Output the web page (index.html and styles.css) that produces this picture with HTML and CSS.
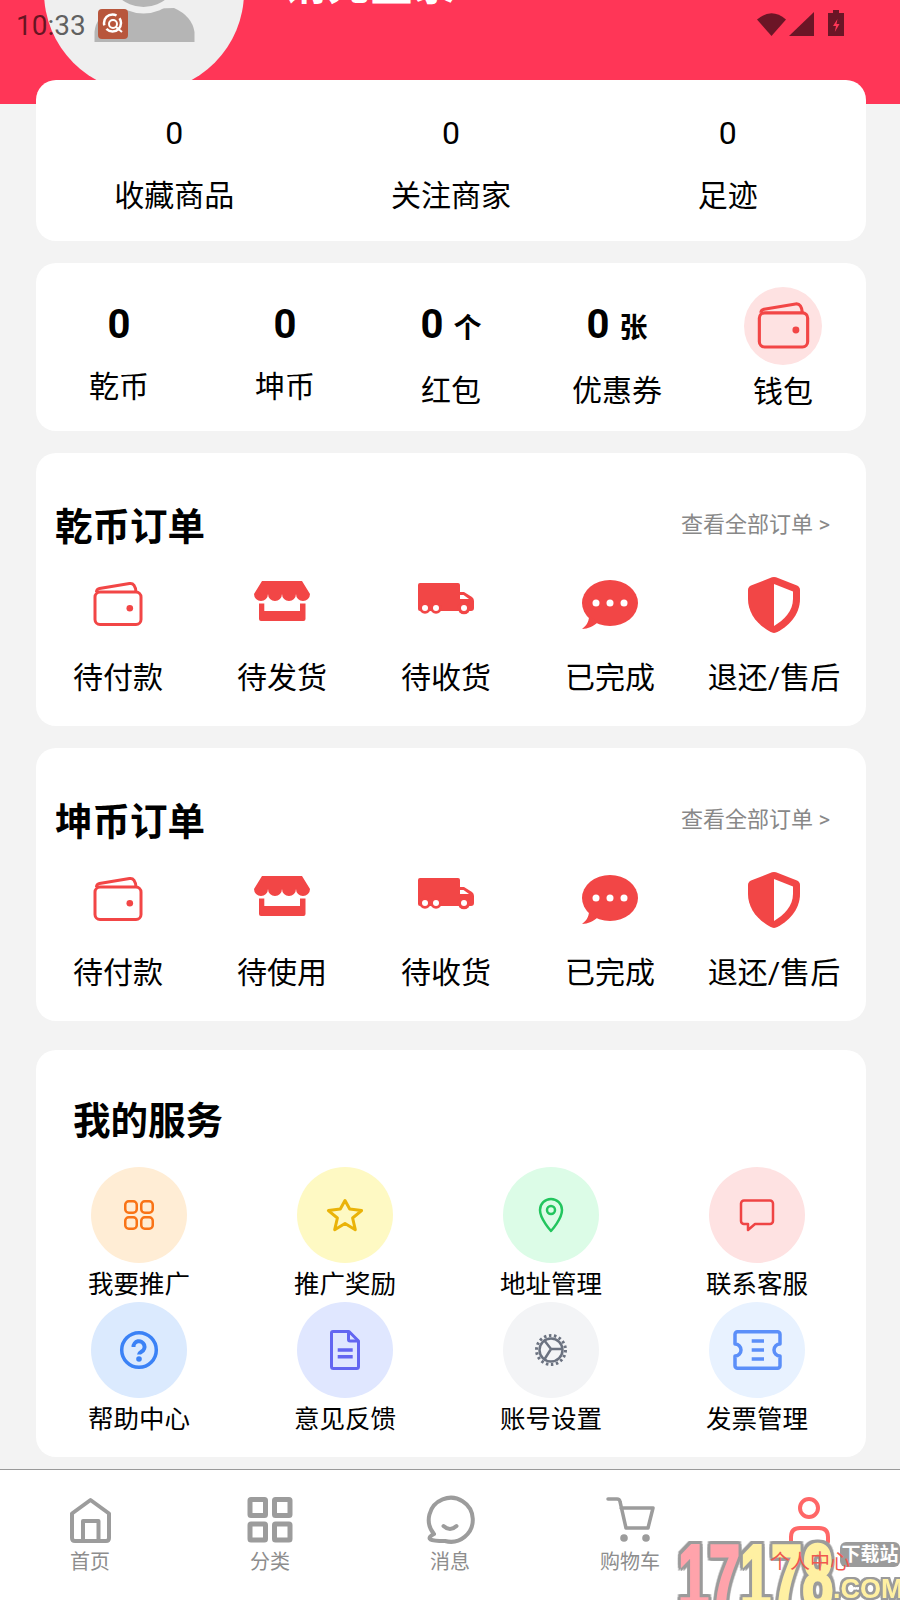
FILE: index.html
```html
<!DOCTYPE html>
<html lang="zh-CN">
<head>
<meta charset="utf-8">
<title>个人中心</title>
<link rel="stylesheet" href="styles.css">
</head>
<body>
<svg class="sprite" xmlns="http://www.w3.org/2000/svg">
  <symbol id="i-wallet" viewBox="0 0 60 60">
    <g transform="translate(5.5 7)" fill="none" stroke="currentColor" stroke-width="3">
      <rect x="1.5" y="10" width="46" height="32.5" rx="5"/>
      <path d="M3 10C3 8 4 7 6 6.500L36 1.600C40 1 42 4 42.500 10"/>
      <circle cx="36.300" cy="26.300" r="3.300" fill="currentColor" stroke="none"/>
    </g>
  </symbol>
  <symbol id="i-store" viewBox="0 0 60 60">
    <g transform="translate(2 6)" fill="currentColor">
      <path d="M8 0H48L56 13A7 7 0 0 1 42 13A7 7 0 0 1 28 13A7 7 0 0 1 14 13A7 7 0 0 1 0 13Z"/>
      <path d="M5 22.500H10.300V30H46V22.500H51.500V38Q51.500 40 49.500 40H7Q5 40 5 38Z"/>
    </g>
  </symbol>
  <symbol id="i-truck" viewBox="0 0 60 60">
    <g transform="translate(2 8)">
      <path fill="currentColor" d="M2 0H40Q42 0 42 2V9H46L54 14Q56 15.500 56 18V25Q56 28 53 28H2Q0 28 0 26V2Q0 0 2 0Z"/>
      <circle cx="7" cy="25" r="5.800" fill="currentColor"/>
      <circle cx="18" cy="25" r="5.800" fill="currentColor"/>
      <circle cx="46" cy="25" r="6.300" fill="currentColor"/>
      <circle cx="7" cy="25" r="3" fill="#fff"/>
      <circle cx="18" cy="25" r="3" fill="#fff"/>
      <circle cx="46" cy="25" r="3" fill="#fff"/>
      <path fill="#fff" d="M42 12H45.500L51 16H42Z"/>
    </g>
  </symbol>
  <symbol id="i-bubble" viewBox="0 0 60 60">
    <g transform="translate(2 5)">
      <ellipse cx="28" cy="23" rx="28" ry="23" fill="currentColor"/>
      <path fill="currentColor" d="M7 36C7 42 4 46 0 49C6 49 12 46 16 42Z"/>
      <circle cx="14" cy="23" r="3.500" fill="#fff"/>
      <circle cx="28" cy="23" r="3.500" fill="#fff"/>
      <circle cx="42" cy="23" r="3.500" fill="#fff"/>
    </g>
  </symbol>
  <symbol id="i-shield" viewBox="0 0 60 60">
    <g transform="translate(4 2)">
      <path fill="currentColor" d="M24 0.300Q26 -0.300 28 0.300L49 8.500Q52 10 52 13V22C52 38 40 50 28 55.500Q26 56.300 24 55.500C12 50 0 38 0 22V13Q0 10 3 8.500Z"/>
      <path fill="#fff" d="M26 7L45 14.500V22C45 34 36 43 26 49Z"/>
    </g>
  </symbol>
</svg>

<div class="status">
  <span class="clock">10:33</span>
  <svg class="app-badge" viewBox="0 0 30 30" aria-hidden="true">
    <rect width="30" height="30" rx="4" fill="#b8563c"/>
    <g fill="none" stroke="#fff">
      <circle cx="14.500" cy="14" r="8.500" stroke-width="2.500" stroke-dasharray="20 4"/>
      <circle cx="15" cy="15" r="4" stroke-width="2"/>
      <path d="M18 18L24 23" stroke-width="2"/>
    </g>
  </svg>
  <span class="status-fill"></span>
  <svg class="status-wifi" viewBox="0 0 29 24" aria-hidden="true"><path d="M0 7.500Q14.500 -5 29 7.500L14.500 24Z"/></svg>
  <svg class="status-signal" viewBox="0 0 25 24" aria-hidden="true"><path d="M25 0V24H0Z"/></svg>
  <svg class="status-battery" viewBox="0 0 16 26" aria-hidden="true">
    <path d="M5 0H11V3H16V26H0V3H5Z"/>
    <path d="M9.500 9L5 16H8L6.800 22L11.500 14H8.500Z" fill="#ff3657"/>
  </svg>
</div>

<header class="hero">
  <div class="avatar">
    <svg class="avatar-figure" viewBox="0 0 200 200" aria-hidden="true">
      <path fill="#b5b5b5" d="M50.500 150V140Q52 124 68 118L130 116Q148 124 150.500 140V150Z"/>
      <circle cx="99.500" cy="79" r="42.500" fill="#efefef"/>
      <circle cx="99.500" cy="79" r="36" fill="#b5b5b5"/>
    </svg>
  </div>
  <div class="login">请先登录</div>
</header>

<main class="page">
  <section class="card trio">
    <div class="trio-item"><div class="trio-num">0</div><div class="trio-label">收藏商品</div></div>
    <div class="trio-item"><div class="trio-num">0</div><div class="trio-label">关注商家</div></div>
    <div class="trio-item"><div class="trio-num">0</div><div class="trio-label">足迹</div></div>
  </section>

  <section class="card assets">
    <div class="asset"><div class="asset-num">0</div><div class="asset-label">乾币</div></div>
    <div class="asset"><div class="asset-num">0</div><div class="asset-label">坤币</div></div>
    <div class="asset"><div class="asset-num">0<span class="asset-unit">个</span></div><div class="asset-label asset-label-low">红包</div></div>
    <div class="asset"><div class="asset-num">0<span class="asset-unit">张</span></div><div class="asset-label asset-label-low">优惠券</div></div>
    <div class="asset">
      <div class="wallet-disc"><svg class="icon-disc"><use href="#i-wallet"/></svg></div>
      <div class="asset-label wallet-label">钱包</div>
    </div>
  </section>

  <section class="card orders">
    <div class="orders-head"><h2 class="card-title">乾币订单</h2><a class="orders-all">查看全部订单 &gt;</a></div>
    <div class="orders-grid">
      <div class="order"><svg class="icon-60"><use href="#i-wallet"/></svg><span class="order-label">待付款</span></div>
      <div class="order"><svg class="icon-60"><use href="#i-store"/></svg><span class="order-label">待发货</span></div>
      <div class="order"><svg class="icon-60"><use href="#i-truck"/></svg><span class="order-label">待收货</span></div>
      <div class="order"><svg class="icon-60"><use href="#i-bubble"/></svg><span class="order-label">已完成</span></div>
      <div class="order"><svg class="icon-60"><use href="#i-shield"/></svg><span class="order-label">退还/售后</span></div>
    </div>
  </section>

  <section class="card orders">
    <div class="orders-head"><h2 class="card-title">坤币订单</h2><a class="orders-all">查看全部订单 &gt;</a></div>
    <div class="orders-grid">
      <div class="order"><svg class="icon-60"><use href="#i-wallet"/></svg><span class="order-label">待付款</span></div>
      <div class="order"><svg class="icon-60"><use href="#i-store"/></svg><span class="order-label">待使用</span></div>
      <div class="order"><svg class="icon-60"><use href="#i-truck"/></svg><span class="order-label">待收货</span></div>
      <div class="order"><svg class="icon-60"><use href="#i-bubble"/></svg><span class="order-label">已完成</span></div>
      <div class="order"><svg class="icon-60"><use href="#i-shield"/></svg><span class="order-label">退还/售后</span></div>
    </div>
  </section>

  <section class="card services">
    <h2 class="card-title services-title">我的服务</h2>
    <div class="services-grid">
      <div class="service">
        <div class="disc disc-orange"><svg class="icon-48" viewBox="0 0 48 48" fill="none" stroke="#f97316" stroke-width="2.500"><rect x="10.250" y="10.250" width="11.500" height="11.500" rx="3.500"/><rect x="26.250" y="10.250" width="11.500" height="11.500" rx="3.500"/><rect x="10.250" y="26.250" width="11.500" height="11.500" rx="3.500"/><rect x="26.250" y="26.250" width="11.500" height="11.500" rx="3.500"/></svg></div>
        <span class="service-label">我要推广</span>
      </div>
      <div class="service">
        <div class="disc disc-yellow"><svg class="icon-48" viewBox="0 0 48 48" fill="none" stroke="#eab308" stroke-width="3" stroke-linejoin="round"><path d="M24 9.500L28.700 18L40.600 19.600L31.600 27L34.300 38.700L24 32.500L13.700 38.700L16.400 27L7.400 19.600L19.300 18Z"/></svg></div>
        <span class="service-label">推广奖励</span>
      </div>
      <div class="service">
        <div class="disc disc-green"><svg class="icon-48" viewBox="0 0 48 48" fill="none" stroke="#22c55e" stroke-width="2.500" stroke-linejoin="round"><path d="M24 40C24 40 13 28 13 19A11 11 0 0 1 35 19C35 28 24 40 24 40Z"/><circle cx="24" cy="19" r="4"/></svg></div>
        <span class="service-label">地址管理</span>
      </div>
      <div class="service">
        <div class="disc disc-red"><svg class="icon-48" viewBox="0 0 48 48" fill="none" stroke="#ef4444" stroke-width="2.500" stroke-linejoin="round"><path d="M11 9.500H37A3 3 0 0 1 40 12.500V30A3 3 0 0 1 37 33H22L15 39V33H11A3 3 0 0 1 8 30V12.500A3 3 0 0 1 11 9.500Z"/></svg></div>
        <span class="service-label">联系客服</span>
      </div>
      <div class="service">
        <div class="disc disc-blue"><svg class="icon-48" viewBox="0 0 48 48" fill="none" stroke="#3b82f6"><circle cx="24" cy="24" r="17.300" stroke-width="3.500"/><path d="M18.500 21A5.500 5.500 0 1 1 26.700 25.500C25 26.500 24 27 24 28.500" stroke-width="4"/><circle cx="24" cy="33" r="2.800" fill="#3b82f6" stroke="none"/></svg></div>
        <span class="service-label">帮助中心</span>
      </div>
      <div class="service">
        <div class="disc disc-indigo"><svg class="icon-48" viewBox="0 0 48 48" fill="none" stroke="#6366f1" stroke-width="3" stroke-linejoin="round"><path d="M12 5.500H28L37.500 15V40.500A2 2 0 0 1 35.500 42.500H12.500A2 2 0 0 1 10.500 40.500V7A1.500 1.500 0 0 1 12 5.500Z"/><path d="M27.500 5.500V13.500Q27.500 15 29 15H37.500"/><path d="M16.700 24H31.700M16.700 30.700H31.700" stroke-width="3.500"/></svg></div>
        <span class="service-label">意见反馈</span>
      </div>
      <div class="service">
        <div class="disc disc-gray"><svg class="icon-48" viewBox="0 0 48 48" fill="none" stroke="#6b7280"><circle cx="24" cy="24" r="14.500" stroke-width="3" stroke-dasharray="2.500 2.560"/><circle cx="24" cy="24" r="11.500" stroke-width="2.500"/><path d="M24 23L17 14M24 23H35M24 23L17 34" stroke-width="2.500"/></svg></div>
        <span class="service-label">账号设置</span>
      </div>
      <div class="service">
        <div class="disc disc-sky"><svg class="icon-48" viewBox="0 0 48 48" fill="none" stroke="#5b8ff9" stroke-width="3.500" stroke-linejoin="round"><path d="M4.500 5.750H44.500A2.500 2.500 0 0 1 47 8.250V18A6 6 0 0 0 47 30V39.750A2.500 2.500 0 0 1 44.500 42.250H4.500A2.500 2.500 0 0 1 2 39.750V30A6 6 0 0 0 2 18V8.250A2.500 2.500 0 0 1 4.500 5.750Z"/><path d="M18.700 15H31M18.700 24H31M18.700 33H31"/></svg></div>
        <span class="service-label">发票管理</span>
      </div>
    </div>
  </section>
</main>

<nav class="tabbar">
  <div class="tab">
    <svg class="tab-icon" viewBox="0 0 60 50" fill="none" stroke="#9c9c9c" stroke-width="4" stroke-linejoin="round"><path d="M30.500 5L49 18.500V43Q49 46 46 46H15Q12 46 12 43V18.500Z"/><path d="M23 46V26H38.500V46"/></svg>
    <span class="tab-label">首页</span>
  </div>
  <div class="tab">
    <svg class="tab-icon" viewBox="0 0 60 50" fill="none" stroke="#9c9c9c" stroke-width="5"><rect x="10" y="4.500" width="15.500" height="16" rx="1"/><rect x="34.500" y="4.500" width="15.500" height="16" rx="1"/><rect x="10" y="29" width="15.500" height="16" rx="1"/><rect x="34.500" y="29" width="15.500" height="16" rx="1"/></svg>
    <span class="tab-label">分类</span>
  </div>
  <div class="tab">
    <svg class="tab-icon" viewBox="0 0 60 50" fill="none" stroke="#9c9c9c" stroke-width="4" stroke-linecap="round" stroke-linejoin="round"><path d="M14 39A22 22 0 1 1 25 46C20 46 13 46 10.500 44.500C8.500 43 10 41 14 39Z"/><path d="M23.500 31Q30 37 36.500 31"/></svg>
    <span class="tab-label">消息</span>
  </div>
  <div class="tab">
    <svg class="tab-icon" viewBox="0 0 60 50" fill="none" stroke="#9c9c9c" stroke-width="3.500" stroke-linecap="round" stroke-linejoin="round"><path d="M8 4H17Q19.500 4 20 6.500L26 33H48L53 13H21"/><circle cx="24" cy="43" r="3.800" fill="#9c9c9c" stroke="none"/><circle cx="46" cy="43" r="3.800" fill="#9c9c9c" stroke="none"/></svg>
    <span class="tab-label">购物车</span>
  </div>
  <div class="tab tab-active">
    <svg class="tab-icon" viewBox="0 0 60 50" fill="none" stroke="#ff6767" stroke-width="4" stroke-linecap="round"><circle cx="29" cy="13" r="9"/><path d="M11 47V42Q11 33 20 33H39Q48 33 48 42V47"/></svg>
    <span class="tab-label tab-label-active">个人中心</span>
  </div>
  <div class="stamp">
    <div class="stamp-digits"><span class="stamp-pink">17</span><span class="stamp-yellow">178</span></div>
    <div class="stamp-tag">下载站</div>
    <div class="stamp-com">.COM</div>
  </div>
</nav>
</body>
</html>
```

FILE: styles.css
```css
* {
  box-sizing: border-box;
}

html,
body {
  margin: 0;
  padding: 0;
}

body {
  position: relative;
  display: flex;
  flex-direction: column;
  width: 900px;
  height: 1600px;
  overflow: hidden;
  background: #f3f3f3;
  color: #000;
  font-family: Roboto, "Noto Sans CJK SC", sans-serif;
}

.sprite {
  display: none;
}

/* system status bar */
.status {
  position: absolute;
  top: 0;
  left: 0;
  right: 0;
  z-index: 3;
  display: flex;
  align-items: flex-start;
  height: 42px;
  padding: 9px 56px 0 16px;
}

.clock {
  width: 82px;
  font-size: 28px;
  line-height: 33px;
  color: rgba(0, 0, 0, 0.62);
}

.app-badge {
  width: 30px;
  height: 30px;
}

.status-fill {
  flex: 1;
}

.status-wifi {
  width: 29px;
  height: 24px;
  margin-top: 3px;
  fill: #6b1526;
}

.status-signal {
  width: 25px;
  height: 24px;
  margin: 3px 14px 0 3px;
  fill: #6b1526;
}

.status-battery {
  width: 16px;
  height: 26px;
  margin-top: 1px;
  fill: #6b1526;
}

/* red banner */
.hero {
  position: relative;
  flex: none;
  height: 104px;
  overflow: hidden;
  background: #ff3657;
}

.avatar {
  position: absolute;
  top: -108px;
  left: 44px;
  width: 200px;
  height: 200px;
  overflow: hidden;
  border-radius: 50%;
  background: #efefef;
}

.avatar-figure {
  display: block;
  width: 200px;
  height: 200px;
}

.login {
  position: absolute;
  top: -36px;
  left: 284px;
  font-size: 43px;
  font-weight: 700;
  line-height: 43px;
  color: #fff;
}

/* cards */
.page {
  position: relative;
  z-index: 1;
  flex: 1;
  display: flex;
  flex-direction: column;
  margin-top: -24px;
  padding: 0 34px 0 36px;
}

.card {
  width: 830px;
  background: #fff;
  border-radius: 20px;
}

.trio {
  display: grid;
  grid-template-columns: repeat(3, 1fr);
  height: 161px;
  padding-top: 36px;
}

.trio-item {
  text-align: center;
}

.trio-num {
  font-size: 32px;
  line-height: 34px;
}

.trio-label {
  margin-top: 26px;
  font-size: 30px;
  line-height: 40px;
}

.assets {
  display: grid;
  grid-template-columns: repeat(5, 1fr);
  height: 168px;
  margin-top: 22px;
  padding-top: 24px;
}

.asset {
  display: flex;
  flex-direction: column;
  align-items: center;
}

.asset-num {
  height: 46px;
  margin-top: 15px;
  font-size: 40px;
  font-weight: 700;
  line-height: 46px;
}

.asset-unit {
  margin-left: 10px;
  font-size: 28px;
}

.asset-label {
  margin-top: 19px;
  font-size: 30px;
  line-height: 40px;
}

.asset-label-low {
  margin-top: 23px;
}

.wallet-disc {
  display: flex;
  align-items: center;
  justify-content: center;
  width: 78px;
  height: 78px;
  border-radius: 50%;
  background: #fee2e2;
  color: #f24646;
}

.wallet-label {
  margin-top: 7px;
}

.icon-disc {
  display: block;
  flex: none;
  width: 63px;
  height: 63px;
}

.icon-60 {
  display: block;
  flex: none;
  width: 60px;
  height: 60px;
}

.orders {
  height: 273px;
  margin-top: 22px;
  padding-top: 51px;
}

.orders-head {
  display: flex;
  align-items: center;
  justify-content: space-between;
  height: 46px;
  padding: 0 36px 0 19px;
}

.card-title {
  margin: 0;
  font-size: 37.5px;
  font-weight: 700;
  line-height: 46px;
}

.orders-all {
  margin-bottom: 4px;
  font-size: 22px;
  line-height: 30px;
  color: #888;
}

.orders-grid {
  display: grid;
  grid-template-columns: repeat(5, 164px);
  margin-top: 25px;
}

.order {
  display: flex;
  flex-direction: column;
  align-items: center;
  color: #f24646;
}

.order-label {
  margin-top: 23px;
  font-size: 30px;
  line-height: 40px;
  white-space: nowrap;
  color: #000;
}

.services {
  height: 407px;
  margin-top: 29px;
  padding-top: 48px;
}

.services-title {
  padding-left: 37px;
}

.services-grid {
  display: grid;
  grid-template-columns: repeat(4, 206px);
  margin-top: 23px;
}

.service {
  display: flex;
  flex-direction: column;
  align-items: center;
}

.disc {
  display: flex;
  align-items: center;
  justify-content: center;
  width: 96px;
  height: 96px;
  border-radius: 50%;
}

.disc-orange { background: #ffedd5; }
.disc-yellow { background: #fef9c3; }
.disc-green { background: #dcfce7; }
.disc-red { background: #fee2e2; }
.disc-blue { background: #dbeafe; }
.disc-indigo { background: #e0e7ff; }
.disc-gray { background: #f3f4f6; }
.disc-sky { background: #e8f2ff; }

.icon-48 {
  display: block;
  width: 48px;
  height: 48px;
  overflow: visible;
}

.service-label {
  margin-top: 4px;
  font-size: 25.5px;
  line-height: 35px;
  white-space: nowrap;
}

/* bottom navigation */
.tabbar {
  position: relative;
  z-index: 2;
  flex: none;
  display: grid;
  grid-template-columns: repeat(5, 180px);
  height: 131px;
  padding-top: 25px;
  overflow: hidden;
  background: #fff;
  border-top: 1px solid #999;
}

.tab {
  display: flex;
  flex-direction: column;
  align-items: center;
}

.tab-icon {
  display: block;
  width: 60px;
  height: 50px;
}

.tab-label {
  margin-top: 4px;
  font-size: 20px;
  line-height: 26px;
  color: #8d8d8d;
}

.tab-label-active {
  position: relative;
  z-index: 2;
  color: #f0584e;
  white-space: nowrap;
}

/* download-site stamp in the corner */
.stamp {
  position: absolute;
  top: 70px;
  left: 677px;
  width: 223px;
  height: 61px;
  z-index: 1;
}

.stamp-digits {
  position: absolute;
  top: -7px;
  left: 1px;
  font-family: "Liberation Sans", sans-serif;
  font-size: 90px;
  font-weight: 700;
  line-height: 88px;
  white-space: nowrap;
  transform: scaleX(0.62);
  transform-origin: left top;
  -webkit-text-stroke: 3px currentColor;
  filter: drop-shadow(4px 0 0 #9b9b9b) drop-shadow(-4px 0 0 #9b9b9b) drop-shadow(0 3px 0 #9b9b9b) drop-shadow(0 -3px 0 #9b9b9b);
}

.stamp-pink {
  color: #ffa3ab;
}

.stamp-yellow {
  color: #fff0a2;
}

.stamp-tag {
  position: absolute;
  top: 2px;
  left: 163px;
  width: 60px;
  height: 25px;
  border-radius: 6px;
  background: #9b9b9b;
  font-size: 19px;
  font-weight: 700;
  line-height: 25px;
  text-align: center;
  color: #fff;
  white-space: nowrap;
}

.stamp-com {
  position: absolute;
  top: 35px;
  left: 156px;
  font-family: "Liberation Sans", sans-serif;
  font-size: 27px;
  font-weight: 700;
  line-height: 28px;
  color: #fff0a2;
  white-space: nowrap;
  filter: drop-shadow(2px 0 0 #9b9b9b) drop-shadow(-2px 0 0 #9b9b9b) drop-shadow(0 2px 0 #9b9b9b) drop-shadow(0 -2px 0 #9b9b9b);
}
```
